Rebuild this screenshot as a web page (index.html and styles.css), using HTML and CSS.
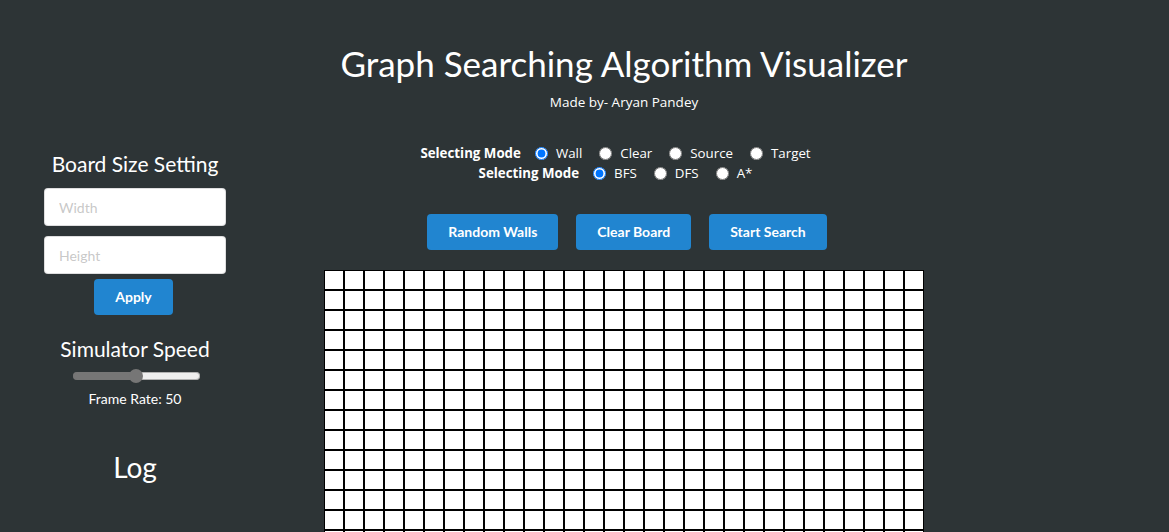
FILE: index.html
```html
<!DOCTYPE html>
<html lang="en">
<head>
<meta charset="utf-8">
<title>Graph Searching Algorithm Visualizer</title>
<link rel="stylesheet" href="styles.css">
</head>
<body>
<div class="page">
  <aside class="sidebar">
    <h2 class="side-title board-title">Board Size Setting</h2>
    <input class="text-input" type="text" placeholder="Width">
    <input class="text-input second" type="text" placeholder="Height">
    <button class="btn apply">Apply</button>
    <h2 class="side-title speed-title">Simulator Speed</h2>
    <input class="speed" type="range" min="0" max="100" value="50">
    <div class="frame-rate">Frame Rate: 50</div>
    <h1 class="log-title">Log</h1>
  </aside>
  <main class="main">
    <h1 class="title">Graph Searching Algorithm Visualizer</h1>
    <p class="author">Made by- Aryan Pandey</p>
    <div class="modes">
      <div class="mode-row">
        <span class="mode-label">Selecting Mode</span>
        <label class="opt"><input type="radio" name="sel" checked><span>Wall</span></label>
        <label class="opt"><input type="radio" name="sel"><span>Clear</span></label>
        <label class="opt"><input type="radio" name="sel"><span>Source</span></label>
        <label class="opt"><input type="radio" name="sel"><span>Target</span></label>
      </div>
      <div class="mode-row">
        <span class="mode-label">Selecting Mode</span>
        <label class="opt"><input type="radio" name="algo" checked><span>BFS</span></label>
        <label class="opt"><input type="radio" name="algo"><span>DFS</span></label>
        <label class="opt"><input type="radio" name="algo"><span>A*</span></label>
      </div>
    </div>
    <div class="actions">
      <button class="btn">Random Walls</button>
      <button class="btn">Clear Board</button>
      <button class="btn">Start Search</button>
    </div>
    <div class="board" id="board"></div>
  </main>
</div>
<script src="script.js"></script>
</body>
</html>
```

FILE: styles.css
```css
* { box-sizing: border-box; }
html, body { margin: 0; padding: 0; }
body {
  background: #2d3436;
  color: #ffffff;
  font-family: Lato, "Open Sans", sans-serif;
  font-size: 14px;
}
.page {
  display: grid;
  grid-template-columns: 270px 708px 1fr;
}
.sidebar {
  display: flex;
  flex-direction: column;
  align-items: center;
  padding-top: 152px;
}
.side-title {
  margin: 0;
  font-weight: 400;
  font-size: 21px;
  line-height: 24px;
}
.text-input {
  width: 182px;
  height: 38px;
  margin-top: 12px;
  padding: 0 14px;
  border: 1px solid rgba(34,36,38,.15);
  border-radius: 4px;
  background: #fff;
  font-family: Lato, sans-serif;
  font-size: 14px;
  color: rgba(0,0,0,.87);
  outline: none;
}
.text-input.second { margin-top: 10px; }
.text-input::placeholder { color: rgba(191,191,191,.87); }
.btn {
  background: #2185d0;
  color: #fff;
  border: none;
  border-radius: 4px;
  font-family: Lato, sans-serif;
  font-weight: 700;
  font-size: 14px;
  line-height: 14px;
  height: 36px;
  padding: 0 21px;
  cursor: pointer;
}
.apply { margin-top: 5px; margin-right: 3px; }
.speed-title { margin-top: 22px; }
.speed {
  -webkit-appearance: none;
  appearance: none;
  width: 127px;
  height: 8px;
  margin: 11px 0 0 2px;
  border-radius: 4px;
  background: linear-gradient(to right, #767676 50%, #efefef 50%);
  box-shadow: inset 0 0 0 1px rgba(118,118,118,.5);
}
.speed::-webkit-slider-thumb {
  -webkit-appearance: none;
  appearance: none;
  width: 14px;
  height: 14px;
  border-radius: 50%;
  background: #767676;
}
.frame-rate {
  margin-top: 10px;
  font-size: 14px;
  line-height: 17px;
}
.log-title {
  margin: 43px 0 0;
  font-weight: 400;
  font-size: 28px;
  line-height: 34px;
}
.main {
  display: flex;
  flex-direction: column;
  align-items: center;
  padding-top: 43px;
}
.title {
  margin: 0;
  font-weight: 400;
  font-size: 35px;
  line-height: 40px;
}
.author {
  margin: 10px 0 0;
  font-family: "Open Sans", sans-serif;
  font-size: 13.5px;
  line-height: 18px;
}
.modes {
  margin-top: 32px;
  display: flex;
  flex-direction: column;
  align-items: center;
  font-family: "Open Sans", sans-serif;
  font-size: 13.3px;
}
.mode-row {
  display: flex;
  align-items: center;
  height: 20px;
}
.mode-label {
  font-weight: 700;
  margin-right: 14px;
}
.opt {
  display: flex;
  align-items: center;
  margin-right: 17px;
}
.opt input {
  width: 13px;
  height: 13px;
  margin: 0 8px 0 0;
  accent-color: #0075ff;
}
.actions {
  margin-top: 31px;
  display: flex;
  gap: 18px;
  padding-left: 6px;
}
.board {
  margin-top: 20px;
  display: grid;
  grid-template-columns: repeat(30, 20px);
  grid-auto-rows: 20px;
  background: #fff;
}
.cell {
  border: 1px solid #000;
  background: #fff;
}
```

FILE: script.js
```js
const board = document.getElementById('board');
for (let i = 0; i < 30 * 20; i++) {
  const c = document.createElement('div');
  c.className = 'cell';
  board.appendChild(c);
}
```
